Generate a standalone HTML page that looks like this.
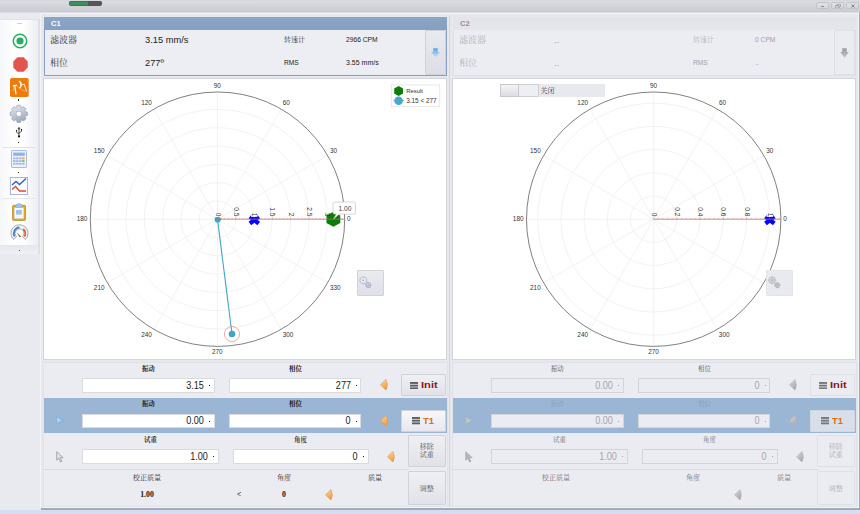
<!DOCTYPE html>
<html lang="zh"><head><meta charset="utf-8"><title>C1 C2</title>
<style>
html,body{margin:0;padding:0}
body{width:860px;height:514px;position:relative;overflow:hidden;background:#e9eaef;font-family:"Liberation Sans","Noto Serif CJK SC",sans-serif}
.abs{position:absolute}
.wb{top:2.3px;width:13.7px;height:6.6px;background:linear-gradient(#e0e1e7,#d5d6dc);border:0.8px solid #c2c3ca;box-sizing:border-box;border-radius:1.6px}
.t{font-family:"Liberation Sans","Noto Serif CJK SC",sans-serif;white-space:nowrap}
.cj{font-family:"Liberation Sans","Noto Serif CJK SC",serif;white-space:nowrap}
.ser{font-family:"Liberation Serif","Noto Serif CJK SC",serif;font-size:7.8px;font-weight:bold;line-height:9px;text-align:center;color:#111}
.bt{font-family:"Liberation Sans",sans-serif;font-weight:bold;font-size:9.7px;line-height:12px;white-space:nowrap;transform-origin:0 50%}
.lab{font-size:7.1px;line-height:10px;text-align:center}
.lab.sm{font-size:6.4px}
.al{font-family:"Liberation Sans",sans-serif;font-size:6.4px;fill:#333}
.rl{font-family:"Liberation Sans",sans-serif;font-size:7.3px;fill:#333}
.btnd{background:#ebecf1;border:1px solid #dfe0e6;box-sizing:border-box;border-radius:1px}
.btn{background:linear-gradient(#eff0f4,#e0e2e8);border:1px solid #d0d2d9;box-sizing:border-box;border-radius:1px}
.inp{box-sizing:border-box;font-family:"Liberation Sans",sans-serif;font-size:10.2px;line-height:12px;text-align:right}
.inp span{position:absolute;right:9.8px;top:0.4px;transform:scaleX(0.89);transform-origin:100% 50%}
.inp i{position:absolute;right:3.6px;top:6px;width:1.4px;height:1.2px}
</style></head>
<body>
<svg width="0" height="0" style="position:absolute"><defs>
<linearGradient id="ga" x1="0" y1="0" x2="0.3" y2="1"><stop offset="0" stop-color="#fcd9a4"/><stop offset="1" stop-color="#f39c43"/></linearGradient>
<linearGradient id="gd" x1="0" y1="0" x2="0.6" y2="1"><stop offset="0" stop-color="#dadadc"/><stop offset="1" stop-color="#a9a9ad"/></linearGradient>
<linearGradient id="gb" x1="0" y1="0" x2="0" y2="1"><stop offset="0" stop-color="#5aa2e6"/><stop offset="1" stop-color="#cfe6fb"/></linearGradient>
<linearGradient id="gg" x1="0.2" y1="0" x2="0.6" y2="1"><stop offset="0" stop-color="#e3e7ef"/><stop offset="0.5" stop-color="#c2c9d6"/><stop offset="1" stop-color="#9ca6b9"/></linearGradient>
<linearGradient id="gx" x1="0" y1="0" x2="0" y2="1"><stop offset="0" stop-color="#9c9ca0"/><stop offset="1" stop-color="#c2c2c6"/></linearGradient>
<linearGradient id="gp" x1="0" y1="0" x2="1" y2="1"><stop offset="0" stop-color="#c6e3fb"/><stop offset="1" stop-color="#86bcec"/></linearGradient>
</defs></svg>
<div class="abs" style="left:0;top:0;width:860px;height:11.5px;background:linear-gradient(#d6d7dd 0,#dbdce2 12%,#c9cad2 100%)"></div>
<div class="abs" style="left:0;top:11.5px;width:860px;height:1px;background:#dcdde3"></div>
<div class="abs" style="left:69px;top:0.9px;width:32.5px;height:4.9px;border-radius:2.4px;box-shadow:inset 0 0 0 0.6px #515554;background:linear-gradient(90deg,#3f8f5a 0,#3f8f5a 59%,#55565a 59%,#55565a 100%)"></div>
<div class="abs wb" style="left:815.5px"><div class="abs" style="left:4.6px;top:2.8px;width:3.4px;height:0.9px;background:#8e8f95"></div></div>
<div class="abs wb" style="left:830.6px"><svg class="abs" style="left:3.6px;top:0.4px" width="6" height="4.6" viewBox="0 0 6 4.6"><rect x="1.9" y="0.4" width="3.6" height="2.5" rx="0.6" fill="none" stroke="#8a8b91" stroke-width="0.7"/><rect x="0.4" y="1.6" width="3.6" height="2.5" rx="0.6" fill="#dadbe1" stroke="#8a8b91" stroke-width="0.7"/></svg></div>
<div class="abs wb" style="left:845.5px"><svg class="abs" style="left:4.4px;top:0.7px" width="4" height="4" viewBox="0 0 4 4"><path d="M0.4,0.4 L3.6,3.6 M3.6,0.4 L0.4,3.6" stroke="#85868c" stroke-width="1"/></svg></div>
<div class="abs" style="left:40px;top:13.3px;width:818.6px;height:495px;background:#e7e8ed;border-left:1px solid #f3f4f7;border-top:1px solid #f3f4f7;box-sizing:border-box"></div>
<div class="abs" style="left:0;top:19px;width:40.3px;height:235px;background:linear-gradient(90deg,#f6f7fa 0%,#ffffff 35%,#ffffff 60%,#eceef3 100%);border-right:2px solid #dedfe5;border-top:1px solid #e1e2e8;box-sizing:border-box"></div>
<div class="abs" style="left:0;top:245px;width:38px;height:9px;background:linear-gradient(#e6e7ed,#eff0f5)"></div>
<div class="abs" style="left:17px;top:22.5px;width:5px;height:1px;background:#cfcfd4"></div>
<svg class="abs" style="left:11.5px;top:33px" width="16" height="16" viewBox="0 0 16 16"><circle cx="8" cy="8" r="6.7" fill="#fff" stroke="#27ae60" stroke-width="1.5"/><circle cx="8" cy="8" r="3.6" fill="#27ae60"/></svg>
<svg class="abs" style="left:12.5px;top:57px" width="15" height="15" viewBox="0 0 15 15"><polygon points="4.4,0.3 10.6,0.3 14.7,4.4 14.7,10.6 10.6,14.7 4.4,14.7 0.3,10.6 0.3,4.4" fill="#e2554f"/></svg>
<svg class="abs" style="left:9.9px;top:77.8px" width="18.7" height="19" viewBox="0 0 18.7 19"><rect x="0" y="0" width="18.7" height="19" rx="1.7" fill="#ee7b0a"/><path d="M2.9,7.8 L6.9,7.2 M4.7,7.6 L6.1,16.3" fill="none" stroke="#fff" stroke-width="1.2"/><path d="M9.4,3 Q12.6,6.6 9.6,10.4" fill="none" stroke="#fff" stroke-width="1.3"/><path d="M11.2,6.9 L14.3,6.3 L16.6,13.4" fill="none" stroke="#fff" stroke-width="0.9"/><path d="M3.2,8.2 L3.6,13.6 M6.9,7.4 L8.6,10.4 M10.6,11 L15.6,13.6 M8,4.4 L9.4,3" fill="none" stroke="#f9c79b" stroke-width="0.5"/></svg>
<div class="abs" style="left:18px;top:99.3px;width:1.2px;height:1.3px;background:#333"></div>
<svg class="abs" style="left:9.2px;top:104.1px" width="19.6" height="19.6" viewBox="-9.8 -9.8 19.6 19.6"><polygon points="-2.07,-6.69 -1.75,-8.62 1.75,-8.62 2.07,-6.69 3.27,-6.19 4.86,-7.33 7.33,-4.86 6.19,-3.27 6.69,-2.07 8.62,-1.75 8.62,1.75 6.69,2.07 6.19,3.27 7.33,4.86 4.86,7.33 3.27,6.19 2.07,6.69 1.75,8.62 -1.75,8.62 -2.07,6.69 -3.27,6.19 -4.86,7.33 -7.33,4.86 -6.19,3.27 -6.69,2.07 -8.62,1.75 -8.62,-1.75 -6.69,-2.07 -6.19,-3.27 -7.33,-4.86 -4.86,-7.33 -3.27,-6.19" fill="url(#gg)" stroke="#98a2b6" stroke-width="0.7" stroke-linejoin="round"/><circle r="3.1" fill="#a9b3c5"/><circle r="2.4" fill="#fff"/></svg>
<svg class="abs" style="left:15px;top:127px" width="8" height="11" viewBox="0 0 8 11"><path d="M4,0.3 L5,1.8 H3 Z M4,1.5 V9 M4,7 L1.5,5.2 V3.6 M4,6 L6.5,4.4 V3" fill="none" stroke="#111" stroke-width="0.7"/><circle cx="4" cy="9.4" r="1.1" fill="#111"/><rect x="5.9" y="2" width="1.2" height="1.2" fill="#111"/><circle cx="1.5" cy="3.3" r="0.6" fill="#111"/></svg>
<div class="abs" style="left:18px;top:141.5px;width:1.4px;height:1.4px;background:#222"></div>
<div class="abs" style="left:3px;top:146.5px;width:32px;height:1px;background:#e1e2e8"></div>
<svg class="abs" style="left:11px;top:150px" width="16" height="18" viewBox="0 0 16 18"><rect x="0.4" y="0.4" width="15.2" height="17.2" rx="1.2" fill="#eef2fb" stroke="#8aa0d6" stroke-width="0.8"/><rect x="2.2" y="2.6" width="11.6" height="3.2" fill="#8ab4ea"/><rect x="2.2" y="7.4" width="2.3" height="1.9" fill="#9fb4e6"/><rect x="5.2" y="7.4" width="2.3" height="1.9" fill="#9fb4e6"/><rect x="8.2" y="7.4" width="2.3" height="1.9" fill="#9fb4e6"/><rect x="11.2" y="7.4" width="2.3" height="1.9" fill="#f0a030"/><rect x="2.2" y="10.100000000000001" width="2.3" height="1.9" fill="#9fb4e6"/><rect x="5.2" y="10.100000000000001" width="2.3" height="1.9" fill="#9fb4e6"/><rect x="8.2" y="10.100000000000001" width="2.3" height="1.9" fill="#9fb4e6"/><rect x="11.2" y="10.100000000000001" width="2.3" height="1.9" fill="#7cc040"/><rect x="2.2" y="12.8" width="2.3" height="1.9" fill="#9fb4e6"/><rect x="5.2" y="12.8" width="2.3" height="1.9" fill="#9fb4e6"/><rect x="8.2" y="12.8" width="2.3" height="1.9" fill="#9fb4e6"/><rect x="11.2" y="12.8" width="2.3" height="1.9" fill="#9fb4e6"/></svg>
<div class="abs" style="left:18px;top:171.5px;width:1.4px;height:1.4px;background:#222"></div>
<svg class="abs" style="left:10px;top:177px" width="18" height="18" viewBox="0 0 18 18"><rect x="0.4" y="0.4" width="17.2" height="17.2" fill="#fbfcff" stroke="#9aa6cf" stroke-width="0.8"/><path d="M2,8 L6,4.5 L9.5,7.5 L16,1.5" fill="none" stroke="#2d5fc4" stroke-width="1.4"/><path d="M2,12.5 L5.5,9.5 L9.5,14 L16,14" fill="none" stroke="#d84a3a" stroke-width="1.4"/></svg>
<div class="abs" style="left:3px;top:198px;width:32px;height:1px;background:#e6e7ec"></div>
<svg class="abs" style="left:12px;top:202.5px" width="14" height="18" viewBox="0 0 14 18"><rect x="0.5" y="2.2" width="13" height="15.3" rx="1.3" fill="#e2a51c" stroke="#b07a10" stroke-width="0.6"/><rect x="2.3" y="4.6" width="9.4" height="11" fill="#f4f7fc" stroke="#d0d6e4" stroke-width="0.3"/><rect x="4" y="7" width="5.8" height="4.6" fill="#9fc0ee"/><path d="M4.2,2.8 Q4.2,0.5 7,0.5 Q9.8,0.5 9.8,2.8 L10.6,4.2 H3.4 Z" fill="#a9c4ea" stroke="#7f9fd0" stroke-width="0.5"/></svg>
<svg class="abs" style="left:9.5px;top:224px" width="19" height="17" viewBox="0 0 19 17"><path d="M3.6,15.6 A8.6,8.6 0 1 1 15.4,15.6 L12.4,12.6 A4.4,4.4 0 1 0 6.6,12.6 Z" fill="#f4f4f6" stroke="#8a8a8e" stroke-width="0.7"/><path d="M4.6,12.6 A6.2,6.2 0 0 1 9.5,3.4" fill="none" stroke="#3c7fc8" stroke-width="1.8"/><path d="M13.2,5 A6.2,6.2 0 0 1 14.4,12.6" fill="none" stroke="#e5603a" stroke-width="1.8"/><path d="M6.5,8 L11.2,12.6 L9.4,13.2 Z" fill="#777"/></svg>
<div class="abs" style="left:18.5px;top:249.5px;width:1px;height:1px;background:#555"></div>
<div class="abs" style="left:44px;top:16.5px;width:402.5px;height:59px;background:#eceef4;border:1px solid #86a0c4;box-sizing:border-box"></div>
<div class="abs" style="left:44px;top:16.5px;width:402.5px;height:13px;background:linear-gradient(#8ba5c4,#879fc0)"></div>
<div class="abs bt" style="left:50.5px;top:19.6px;font-size:7.1px;color:#fff;line-height:8px;transform:scaleX(1.06)">C1</div>
<div class="abs cj" style="left:50px;top:34px;font-size:9px;line-height:12px;color:#3a3a3a">滤波器</div>
<div class="abs cj" style="left:50px;top:57px;font-size:9px;line-height:12px;color:#3a3a3a">相位</div>
<div class="abs t" style="left:145px;top:34px;font-size:9.8px;line-height:12px;color:#222;transform:scaleX(0.95);transform-origin:0 0">3.15 mm/s</div>
<div class="abs t" style="left:145px;top:57px;font-size:9.8px;line-height:12px;color:#222;transform:scaleX(0.95);transform-origin:0 0">277º</div>
<div class="abs cj" style="left:284px;top:35px;font-size:7px;line-height:10px;color:#3a3a3a">转速计</div>
<div class="abs t" style="left:284px;top:57.5px;font-size:6.6px;line-height:10px;color:#222">RMS</div>
<div class="abs t" style="left:346px;top:35px;font-size:6.7px;line-height:10px;color:#222">2966 CPM</div>
<div class="abs t" style="left:346px;top:57.5px;font-size:7px;line-height:10px;color:#222">3.55 mm/s</div>
<div class="abs btn" style="left:425.3px;top:29.5px;width:20.3px;height:45.2px;background:linear-gradient(#e9eaef,#dddee5)"></div>
<svg class="abs" style="left:431px;top:47.5px" width="9" height="10" viewBox="0 0 9 10"><path d="M2.2,0.3 H6.8 V4 H8.8 L4.5,9.8 L0.2,4 H2.2 Z" fill="url(#gb)"/></svg>
<div class="abs" style="left:43.2px;top:78px;width:404.1px;height:282.3px;background:#fff;border:1px solid #d3d5dc;box-sizing:border-box"></div>
<svg class="abs" style="left:0;top:0" width="860" height="514" viewBox="0 0 860 514">
<line x1="217.5" y1="219.2" x2="344.70" y2="219.20" stroke="#ececec" stroke-width="0.7"/>
<line x1="217.5" y1="219.2" x2="327.66" y2="155.60" stroke="#ececec" stroke-width="0.7"/>
<line x1="217.5" y1="219.2" x2="281.10" y2="109.04" stroke="#ececec" stroke-width="0.7"/>
<line x1="217.5" y1="219.2" x2="217.50" y2="92.00" stroke="#ececec" stroke-width="0.7"/>
<line x1="217.5" y1="219.2" x2="153.90" y2="109.04" stroke="#ececec" stroke-width="0.7"/>
<line x1="217.5" y1="219.2" x2="107.34" y2="155.60" stroke="#ececec" stroke-width="0.7"/>
<line x1="217.5" y1="219.2" x2="90.30" y2="219.20" stroke="#ececec" stroke-width="0.7"/>
<line x1="217.5" y1="219.2" x2="107.34" y2="282.80" stroke="#ececec" stroke-width="0.7"/>
<line x1="217.5" y1="219.2" x2="153.90" y2="329.36" stroke="#ececec" stroke-width="0.7"/>
<line x1="217.5" y1="219.2" x2="217.50" y2="346.40" stroke="#ececec" stroke-width="0.7"/>
<line x1="217.5" y1="219.2" x2="281.10" y2="329.36" stroke="#ececec" stroke-width="0.7"/>
<line x1="217.5" y1="219.2" x2="327.66" y2="282.80" stroke="#ececec" stroke-width="0.7"/>
<circle cx="217.5" cy="219.2" r="18.30" fill="none" stroke="#ececec" stroke-width="0.7"/>
<circle cx="217.5" cy="219.2" r="36.60" fill="none" stroke="#ececec" stroke-width="0.7"/>
<circle cx="217.5" cy="219.2" r="54.90" fill="none" stroke="#ececec" stroke-width="0.7"/>
<circle cx="217.5" cy="219.2" r="73.20" fill="none" stroke="#ececec" stroke-width="0.7"/>
<circle cx="217.5" cy="219.2" r="91.50" fill="none" stroke="#ececec" stroke-width="0.7"/>
<circle cx="217.5" cy="219.2" r="109.80" fill="none" stroke="#ececec" stroke-width="0.7"/>
<circle cx="217.5" cy="219.2" r="127.2" fill="none" stroke="#606060" stroke-width="0.8"/>
<text x="348.8" y="221.2" text-anchor="middle" class="al">0</text>
<text x="333.5" y="152.7" text-anchor="middle" class="al">30</text>
<text x="286.3" y="105.2" text-anchor="middle" class="al">60</text>
<text x="217.3" y="87.9" text-anchor="middle" class="al">90</text>
<text x="146.5" y="105.2" text-anchor="middle" class="al">120</text>
<text x="99.2" y="152.7" text-anchor="middle" class="al">150</text>
<text x="82.0" y="221.2" text-anchor="middle" class="al">180</text>
<text x="99.2" y="289.9" text-anchor="middle" class="al">210</text>
<text x="146.5" y="337.0" text-anchor="middle" class="al">240</text>
<text x="217.3" y="354.1" text-anchor="middle" class="al">270</text>
<text x="288.0" y="337.0" text-anchor="middle" class="al">300</text>
<text x="335.3" y="289.9" text-anchor="middle" class="al">330</text>
<line x1="217.5" y1="219.2" x2="232.0" y2="334.0" stroke="#3fa6c6" stroke-width="1.1"/>
<circle cx="217.7" cy="219.5" r="3.1" fill="#3fa6c6"/>
<circle cx="232.0" cy="334.0" r="7.6" fill="none" stroke="#e58a8a" stroke-width="0.7"/>
<circle cx="232.0" cy="334.0" r="3.3" fill="#3fa6c6"/>
<path transform="translate(254.3,220)" d="M-4.4,-3.4 L4.4,3.4 M4.4,-3.4 L-4.4,3.4" stroke="#0505ff" stroke-width="4.4" fill="none"/>
<polygon points="333.40,211.80 340.30,215.55 340.30,223.05 333.40,226.80 326.50,223.05 326.50,215.55" fill="#0a7d0a"/>
<line x1="217.5" y1="219.2" x2="344.7" y2="219.2" stroke="#c9615f" stroke-width="0.7"/>
<line x1="217.50" y1="217.60" x2="217.50" y2="219.2" stroke="#c9615f" stroke-width="0.5"/>
<line x1="221.16" y1="218.30" x2="221.16" y2="219.2" stroke="#c9615f" stroke-width="0.5"/>
<line x1="224.82" y1="218.30" x2="224.82" y2="219.2" stroke="#c9615f" stroke-width="0.5"/>
<line x1="228.48" y1="218.30" x2="228.48" y2="219.2" stroke="#c9615f" stroke-width="0.5"/>
<line x1="232.14" y1="218.30" x2="232.14" y2="219.2" stroke="#c9615f" stroke-width="0.5"/>
<line x1="235.80" y1="217.60" x2="235.80" y2="219.2" stroke="#c9615f" stroke-width="0.5"/>
<line x1="239.46" y1="218.30" x2="239.46" y2="219.2" stroke="#c9615f" stroke-width="0.5"/>
<line x1="243.12" y1="218.30" x2="243.12" y2="219.2" stroke="#c9615f" stroke-width="0.5"/>
<line x1="246.78" y1="218.30" x2="246.78" y2="219.2" stroke="#c9615f" stroke-width="0.5"/>
<line x1="250.44" y1="218.30" x2="250.44" y2="219.2" stroke="#c9615f" stroke-width="0.5"/>
<line x1="254.10" y1="217.60" x2="254.10" y2="219.2" stroke="#c9615f" stroke-width="0.5"/>
<line x1="257.76" y1="218.30" x2="257.76" y2="219.2" stroke="#c9615f" stroke-width="0.5"/>
<line x1="261.42" y1="218.30" x2="261.42" y2="219.2" stroke="#c9615f" stroke-width="0.5"/>
<line x1="265.08" y1="218.30" x2="265.08" y2="219.2" stroke="#c9615f" stroke-width="0.5"/>
<line x1="268.74" y1="218.30" x2="268.74" y2="219.2" stroke="#c9615f" stroke-width="0.5"/>
<line x1="272.40" y1="217.60" x2="272.40" y2="219.2" stroke="#c9615f" stroke-width="0.5"/>
<line x1="276.06" y1="218.30" x2="276.06" y2="219.2" stroke="#c9615f" stroke-width="0.5"/>
<line x1="279.72" y1="218.30" x2="279.72" y2="219.2" stroke="#c9615f" stroke-width="0.5"/>
<line x1="283.38" y1="218.30" x2="283.38" y2="219.2" stroke="#c9615f" stroke-width="0.5"/>
<line x1="287.04" y1="218.30" x2="287.04" y2="219.2" stroke="#c9615f" stroke-width="0.5"/>
<line x1="290.70" y1="217.60" x2="290.70" y2="219.2" stroke="#c9615f" stroke-width="0.5"/>
<line x1="294.36" y1="218.30" x2="294.36" y2="219.2" stroke="#c9615f" stroke-width="0.5"/>
<line x1="298.02" y1="218.30" x2="298.02" y2="219.2" stroke="#c9615f" stroke-width="0.5"/>
<line x1="301.68" y1="218.30" x2="301.68" y2="219.2" stroke="#c9615f" stroke-width="0.5"/>
<line x1="305.34" y1="218.30" x2="305.34" y2="219.2" stroke="#c9615f" stroke-width="0.5"/>
<line x1="309.00" y1="217.60" x2="309.00" y2="219.2" stroke="#c9615f" stroke-width="0.5"/>
<line x1="312.66" y1="218.30" x2="312.66" y2="219.2" stroke="#c9615f" stroke-width="0.5"/>
<line x1="316.32" y1="218.30" x2="316.32" y2="219.2" stroke="#c9615f" stroke-width="0.5"/>
<line x1="319.98" y1="218.30" x2="319.98" y2="219.2" stroke="#c9615f" stroke-width="0.5"/>
<line x1="323.64" y1="218.30" x2="323.64" y2="219.2" stroke="#c9615f" stroke-width="0.5"/>
<line x1="327.30" y1="217.60" x2="327.30" y2="219.2" stroke="#c9615f" stroke-width="0.5"/>
<line x1="330.96" y1="218.30" x2="330.96" y2="219.2" stroke="#c9615f" stroke-width="0.5"/>
<line x1="334.62" y1="218.30" x2="334.62" y2="219.2" stroke="#c9615f" stroke-width="0.5"/>
<line x1="338.28" y1="218.30" x2="338.28" y2="219.2" stroke="#c9615f" stroke-width="0.5"/>
<line x1="341.94" y1="218.30" x2="341.94" y2="219.2" stroke="#c9615f" stroke-width="0.5"/>
<rect x="214.10" y="212.90" width="6.8" height="4.2" fill="#fff"/>
<line x1="217.5" y1="219.2" x2="221.5" y2="219.2" stroke="#c9615f" stroke-width="0.7"/>
<text transform="translate(215.50,216.40) rotate(90) scale(0.9,1)" text-anchor="end" class="rl">0</text>
<text transform="translate(233.80,216.40) rotate(90) scale(0.9,1)" text-anchor="end" class="rl">0.5</text>
<rect x="250.90" y="212.90" width="6.6" height="3.9" fill="#fff"/>
<text transform="translate(252.10,216.40) rotate(90) scale(0.9,1)" text-anchor="end" class="rl">1</text>
<text transform="translate(270.40,216.40) rotate(90) scale(0.9,1)" text-anchor="end" class="rl">1.5</text>
<text transform="translate(288.70,216.40) rotate(90) scale(0.9,1)" text-anchor="end" class="rl">2</text>
<text transform="translate(307.00,216.40) rotate(90) scale(0.9,1)" text-anchor="end" class="rl">2.5</text>
<text transform="translate(325.30,216.40) rotate(90) scale(0.9,1)" text-anchor="end" class="rl">3</text>
<path d="M334.5,202 H354 Q355.5,202 355.5,203.5 V212.6 Q355.5,214.1 354,214.1 H339.3 L333.6,219 L336.2,214.1 H334.5 Q333,214.1 333,212.6 V203.5 Q333,202 334.5,202 Z" fill="#fff" stroke="#bdbdbd" stroke-width="0.6"/>
<text x="345" y="210.7" text-anchor="middle" class="al" style="font-size:6.6px;fill:#444">1.00</text>
<rect x="391.3" y="85" width="48.5" height="21.7" fill="#fff" stroke="#dedede" stroke-width="0.7"/>
<polygon points="398.60,86.10 403.00,88.55 403.00,93.45 398.60,95.90 394.20,93.45 394.20,88.55" fill="#0a7d0a"/>
<line x1="393.3" y1="100.7" x2="403.9" y2="100.7" stroke="#3fa6c6" stroke-width="0.7"/>
<circle cx="398.6" cy="100.7" r="4.3" fill="#46a9c8"/>
<text x="406.2" y="92.9" class="al" style="font-size:5.9px">Result</text>
<text x="406.2" y="102.9" class="al" style="font-size:6.4px">3.15 &lt; 277</text>
</svg>
<div class="abs" style="left:357.3px;top:270.3px;width:26.5px;height:25.6px;background:linear-gradient(#eaebf1,#dfe0e7);border:1px solid #d2d3da;box-sizing:border-box;border-radius:1px"></div>
<svg class="abs" style="left:357.3px;top:270.3px" width="27" height="25" viewBox="0 0 27 25"><polygon points="9.93,9.58 9.93,11.02 9.20,10.88 8.76,11.94 9.38,12.36 8.36,13.38 7.94,12.76 6.88,13.20 7.02,13.93 5.58,13.93 5.72,13.20 4.66,12.76 4.24,13.38 3.22,12.36 3.84,11.94 3.40,10.88 2.67,11.02 2.67,9.58 3.40,9.72 3.84,8.66 3.22,8.24 4.24,7.22 4.66,7.84 5.72,7.40 5.58,6.67 7.02,6.67 6.88,7.40 7.94,7.84 8.36,7.22 9.38,8.24 8.76,8.66 9.20,9.72" fill="#e9ecf2" stroke="#98a3b8" stroke-width="0.5" stroke-linejoin="round"/><circle cx="6.3" cy="10.3" r="0.7" fill="#8791aa"/><polygon points="14.03,14.58 14.03,15.82 13.48,15.70 13.05,16.60 13.49,16.95 12.51,17.72 12.27,17.22 11.30,17.44 11.30,18.00 10.09,17.72 10.33,17.22 9.55,16.60 9.11,16.95 8.57,15.82 9.12,15.70 9.12,14.70 8.57,14.58 9.11,13.45 9.55,13.80 10.33,13.18 10.09,12.68 11.30,12.40 11.30,12.96 12.27,13.18 12.51,12.68 13.49,13.45 13.05,13.80 13.48,14.70" fill="#cdd3df" stroke="#8791aa" stroke-width="0.5" stroke-linejoin="round"/><circle cx="11.3" cy="15.2" r="0.6" fill="#8791aa"/></svg>
<div class="abs" style="left:42.6px;top:361.5px;width:405.4px;height:145.3px;background:#ebecf1;border:1px solid #e1e2e7;box-sizing:border-box"></div>
<div class="abs" style="left:44px;top:398.2px;width:402.5px;height:34.6px;background:#9bb5d5"></div>
<div class="abs" style="left:44px;top:468.5px;width:364.5px;height:1px;background:#d9dbe1"></div>
<div class="abs cj lab sm" style="left:128.3px;top:363.5px;width:40px;color:#111;font-weight:bold">振动</div>
<div class="abs cj lab sm" style="left:275.5px;top:363.5px;width:40px;color:#111;font-weight:bold">相位</div>
<div class="abs inp" style="left:81.8px;top:378.2px;width:133px;height:14.4px;background:#fff;border:1px solid #d9dbe1;color:#222"><span>3.15</span><i style="background:#222"></i></div>
<div class="abs inp" style="left:228.8px;top:378.2px;width:132.7px;height:14.4px;background:#fff;border:1px solid #d9dbe1;color:#222"><span>277</span><i style="background:#222"></i></div>
<svg class="abs" style="left:380.2px;top:379.4px" width="9" height="11.6" viewBox="0 0 9 11.6"><path d="M0.4,5.8 L6,0.4 Q8.9,5.8 6,11.2 Z" fill="url(#ga)" stroke="#dd9242" stroke-width="0.5" stroke-linejoin="round"/></svg>
<div class="abs btn" style="left:401.3px;top:374.4px;width:44.4px;height:21.8px"></div>
<svg class="abs" style="left:409.7px;top:381.7px" width="8.4" height="7.4" viewBox="0 0 8.4 7.4"><rect x="0" y="0" width="8.4" height="1.9" fill="#5e5e62"/><rect x="0" y="2.7" width="8.4" height="1.9" fill="#5e5e62"/><rect x="0" y="5.4" width="8.4" height="1.9" fill="#5e5e62"/></svg>
<div class="abs bt" style="left:421.2px;top:379.4px;color:#8b1616;transform:scaleX(1.15)">Init</div>
<div class="abs cj lab sm" style="left:128.3px;top:399px;width:40px;color:#111;font-weight:bold">振动</div>
<div class="abs cj lab sm" style="left:275.5px;top:399px;width:40px;color:#111;font-weight:bold">相位</div>
<div class="abs inp" style="left:81.8px;top:413.8px;width:133px;height:14.4px;background:#fff;border:1px solid #d9dbe1;color:#222"><span>0.00</span><i style="background:#222"></i></div>
<div class="abs inp" style="left:228.8px;top:413.8px;width:132.7px;height:14.4px;background:#fff;border:1px solid #d9dbe1;color:#222"><span>0</span><i style="background:#222"></i></div>
<svg class="abs" style="left:380.2px;top:415.0px" width="9" height="11.6" viewBox="0 0 9 11.6"><path d="M0.4,5.8 L6,0.4 Q8.9,5.8 6,11.2 Z" fill="url(#ga)" stroke="#dd9242" stroke-width="0.5" stroke-linejoin="round"/></svg>
<svg class="abs" style="left:55.5px;top:415.8px" width="8" height="9" viewBox="0 0 8 9"><path d="M0.7,0.8 L7,4.5 L0.7,8.2 Z" fill="url(#gp)" stroke="#6aa7e2" stroke-width="0.6"/></svg>
<div class="abs btn" style="left:401.3px;top:410px;width:44.4px;height:21.5px;background:linear-gradient(#f6f7fa,#e6e8ee);"></div>
<svg class="abs" style="left:411.5px;top:417.2px" width="8.4" height="7.4" viewBox="0 0 8.4 7.4"><rect x="0" y="0" width="8.4" height="1.9" fill="#5e5e62"/><rect x="0" y="2.7" width="8.4" height="1.9" fill="#5e5e62"/><rect x="0" y="5.4" width="8.4" height="1.9" fill="#5e5e62"/></svg>
<div class="abs bt" style="left:423.3px;top:414.9px;color:#dd6f12;transform:scaleX(0.97)">T1</div>
<div class="abs cj lab sm" style="left:130.5px;top:434.5px;width:40px;color:#333;font-weight:bold">试重</div>
<div class="abs cj lab sm" style="left:280.5px;top:434.5px;width:40px;color:#333;font-weight:bold">角度</div>
<div class="abs inp" style="left:82.4px;top:449.3px;width:136.5px;height:14.4px;background:#fff;border:1px solid #d9dbe1;color:#222"><span>1.00</span><i style="background:#222"></i></div>
<div class="abs inp" style="left:232.9px;top:449.3px;width:135.9px;height:14.4px;background:#fff;border:1px solid #d9dbe1;color:#222"><span>0</span><i style="background:#222"></i></div>
<svg class="abs" style="left:387.0px;top:450.5px" width="9" height="11.6" viewBox="0 0 9 11.6"><path d="M0.4,5.8 L6,0.4 Q8.9,5.8 6,11.2 Z" fill="url(#ga)" stroke="#dd9242" stroke-width="0.5" stroke-linejoin="round"/></svg>
<svg class="abs" style="left:56px;top:450.5px" width="9" height="12" viewBox="0 0 9 12"><path d="M0.7,0.7 L0.7,9.2 L2.8,7.2 L4.4,11 L5.9,10.4 L4.3,6.7 L7.2,6.7 Z" fill="#dfe1e1" stroke="#8f8f92" stroke-width="0.7"/></svg>
<div class="abs btn" style="left:408px;top:435px;width:37.7px;height:32px"></div>
<div class="abs cj" style="left:408px;top:442.5px;width:37.7px;text-align:center;font-size:7px;line-height:8.5px;color:#5c5c60">移除<br>试重</div>
<div class="abs cj lab" style="left:127px;top:473px;width:40px;color:#333">校正质量</div>
<div class="abs cj lab" style="left:264px;top:473px;width:40px;color:#333">角度</div>
<div class="abs cj lab" style="left:355px;top:473px;width:40px;color:#333">质量</div>
<div class="abs ser" style="left:127px;top:490px;width:40px">1.00</div>
<div class="abs ser" style="left:219px;top:490px;width:40px">&lt;</div>
<div class="abs ser" style="left:264px;top:490px;width:40px">0</div>
<svg class="abs" style="left:325.09999999999997px;top:488.9px" width="9" height="11.6" viewBox="0 0 9 11.6"><path d="M0.4,5.8 L6,0.4 Q8.9,5.8 6,11.2 Z" fill="url(#ga)" stroke="#dd9242" stroke-width="0.5" stroke-linejoin="round"/></svg>
<div class="abs btn" style="left:408px;top:471px;width:37.7px;height:33.5px"></div>
<div class="abs cj" style="left:408px;top:483.5px;width:37.7px;text-align:center;font-size:7px;line-height:9px;color:#5c5c60">调整</div>
<div class="abs" style="left:453px;top:16.5px;width:402.5px;height:59px;background:#ecedf3;border:1px solid #dfe0e7;box-sizing:border-box"></div>
<div class="abs" style="left:453px;top:16.5px;width:402.5px;height:13px;background:#e4e5eb"></div>
<div class="abs bt" style="left:459.5px;top:19.6px;font-size:7.1px;color:#8f9098;line-height:8px;transform:scaleX(1.06)">C2</div>
<div class="abs cj" style="left:459px;top:34px;font-size:9px;line-height:12px;color:#b4b5bd">滤波器</div>
<div class="abs cj" style="left:459px;top:57px;font-size:9px;line-height:12px;color:#b4b5bd">相位</div>
<div class="abs t" style="left:554px;top:34px;font-size:9.8px;line-height:12px;color:#9fa0a8;transform:scaleX(0.95);transform-origin:0 0">..</div>
<div class="abs t" style="left:554px;top:57px;font-size:9.8px;line-height:12px;color:#9fa0a8;transform:scaleX(0.95);transform-origin:0 0">..</div>
<div class="abs cj" style="left:693px;top:35px;font-size:7px;line-height:10px;color:#b4b5bd">转速计</div>
<div class="abs t" style="left:693px;top:57.5px;font-size:6.6px;line-height:10px;color:#9fa0a8">RMS</div>
<div class="abs t" style="left:755px;top:35px;font-size:6.7px;line-height:10px;color:#9fa0a8">0 CPM</div>
<div class="abs t" style="left:755px;top:57.5px;font-size:7px;line-height:10px;color:#9fa0a8">..</div>
<div class="abs btnd" style="left:834.3px;top:29.5px;width:20.3px;height:45.2px;"></div>
<svg class="abs" style="left:840px;top:47.5px" width="9" height="10" viewBox="0 0 9 10"><path d="M2.2,0.3 H6.8 V4 H8.8 L4.5,9.8 L0.2,4 H2.2 Z" fill="url(#gx)"/></svg>
<div class="abs" style="left:452.2px;top:78px;width:404.1px;height:282.3px;background:#fff;border:1px solid #d3d5dc;box-sizing:border-box"></div>
<svg class="abs" style="left:0;top:0" width="860" height="514" viewBox="0 0 860 514">
<line x1="653.7" y1="219.2" x2="780.90" y2="219.20" stroke="#ececec" stroke-width="0.7"/>
<line x1="653.7" y1="219.2" x2="763.86" y2="155.60" stroke="#ececec" stroke-width="0.7"/>
<line x1="653.7" y1="219.2" x2="717.30" y2="109.04" stroke="#ececec" stroke-width="0.7"/>
<line x1="653.7" y1="219.2" x2="653.70" y2="92.00" stroke="#ececec" stroke-width="0.7"/>
<line x1="653.7" y1="219.2" x2="590.10" y2="109.04" stroke="#ececec" stroke-width="0.7"/>
<line x1="653.7" y1="219.2" x2="543.54" y2="155.60" stroke="#ececec" stroke-width="0.7"/>
<line x1="653.7" y1="219.2" x2="526.50" y2="219.20" stroke="#ececec" stroke-width="0.7"/>
<line x1="653.7" y1="219.2" x2="543.54" y2="282.80" stroke="#ececec" stroke-width="0.7"/>
<line x1="653.7" y1="219.2" x2="590.10" y2="329.36" stroke="#ececec" stroke-width="0.7"/>
<line x1="653.7" y1="219.2" x2="653.70" y2="346.40" stroke="#ececec" stroke-width="0.7"/>
<line x1="653.7" y1="219.2" x2="717.30" y2="329.36" stroke="#ececec" stroke-width="0.7"/>
<line x1="653.7" y1="219.2" x2="763.86" y2="282.80" stroke="#ececec" stroke-width="0.7"/>
<circle cx="653.7" cy="219.2" r="23.20" fill="none" stroke="#ececec" stroke-width="0.7"/>
<circle cx="653.7" cy="219.2" r="46.40" fill="none" stroke="#ececec" stroke-width="0.7"/>
<circle cx="653.7" cy="219.2" r="69.60" fill="none" stroke="#ececec" stroke-width="0.7"/>
<circle cx="653.7" cy="219.2" r="92.80" fill="none" stroke="#ececec" stroke-width="0.7"/>
<circle cx="653.7" cy="219.2" r="116.00" fill="none" stroke="#ececec" stroke-width="0.7"/>
<circle cx="653.7" cy="219.2" r="127.2" fill="none" stroke="#606060" stroke-width="0.8"/>
<text x="785.0" y="221.2" text-anchor="middle" class="al">0</text>
<text x="769.7" y="152.7" text-anchor="middle" class="al">30</text>
<text x="722.5" y="105.2" text-anchor="middle" class="al">60</text>
<text x="653.5" y="87.9" text-anchor="middle" class="al">90</text>
<text x="582.7" y="105.2" text-anchor="middle" class="al">120</text>
<text x="535.4" y="152.7" text-anchor="middle" class="al">150</text>
<text x="518.2" y="221.2" text-anchor="middle" class="al">180</text>
<text x="535.4" y="289.9" text-anchor="middle" class="al">210</text>
<text x="582.7" y="337.0" text-anchor="middle" class="al">240</text>
<text x="653.5" y="354.1" text-anchor="middle" class="al">270</text>
<text x="724.2" y="337.0" text-anchor="middle" class="al">300</text>
<text x="771.5" y="289.9" text-anchor="middle" class="al">330</text>
<path transform="translate(769.9000000000001,220)" d="M-4.4,-3.4 L4.4,3.4 M4.4,-3.4 L-4.4,3.4" stroke="#0505ff" stroke-width="4.4" fill="none"/>
<line x1="653.7" y1="219.2" x2="780.9000000000001" y2="219.2" stroke="#c9615f" stroke-width="0.7"/>
<line x1="653.70" y1="217.60" x2="653.70" y2="219.2" stroke="#c9615f" stroke-width="0.5"/>
<line x1="658.34" y1="218.30" x2="658.34" y2="219.2" stroke="#c9615f" stroke-width="0.5"/>
<line x1="662.98" y1="218.30" x2="662.98" y2="219.2" stroke="#c9615f" stroke-width="0.5"/>
<line x1="667.62" y1="218.30" x2="667.62" y2="219.2" stroke="#c9615f" stroke-width="0.5"/>
<line x1="672.26" y1="218.30" x2="672.26" y2="219.2" stroke="#c9615f" stroke-width="0.5"/>
<line x1="676.90" y1="217.60" x2="676.90" y2="219.2" stroke="#c9615f" stroke-width="0.5"/>
<line x1="681.54" y1="218.30" x2="681.54" y2="219.2" stroke="#c9615f" stroke-width="0.5"/>
<line x1="686.18" y1="218.30" x2="686.18" y2="219.2" stroke="#c9615f" stroke-width="0.5"/>
<line x1="690.82" y1="218.30" x2="690.82" y2="219.2" stroke="#c9615f" stroke-width="0.5"/>
<line x1="695.46" y1="218.30" x2="695.46" y2="219.2" stroke="#c9615f" stroke-width="0.5"/>
<line x1="700.10" y1="217.60" x2="700.10" y2="219.2" stroke="#c9615f" stroke-width="0.5"/>
<line x1="704.74" y1="218.30" x2="704.74" y2="219.2" stroke="#c9615f" stroke-width="0.5"/>
<line x1="709.38" y1="218.30" x2="709.38" y2="219.2" stroke="#c9615f" stroke-width="0.5"/>
<line x1="714.02" y1="218.30" x2="714.02" y2="219.2" stroke="#c9615f" stroke-width="0.5"/>
<line x1="718.66" y1="218.30" x2="718.66" y2="219.2" stroke="#c9615f" stroke-width="0.5"/>
<line x1="723.30" y1="217.60" x2="723.30" y2="219.2" stroke="#c9615f" stroke-width="0.5"/>
<line x1="727.94" y1="218.30" x2="727.94" y2="219.2" stroke="#c9615f" stroke-width="0.5"/>
<line x1="732.58" y1="218.30" x2="732.58" y2="219.2" stroke="#c9615f" stroke-width="0.5"/>
<line x1="737.22" y1="218.30" x2="737.22" y2="219.2" stroke="#c9615f" stroke-width="0.5"/>
<line x1="741.86" y1="218.30" x2="741.86" y2="219.2" stroke="#c9615f" stroke-width="0.5"/>
<line x1="746.50" y1="217.60" x2="746.50" y2="219.2" stroke="#c9615f" stroke-width="0.5"/>
<line x1="751.14" y1="218.30" x2="751.14" y2="219.2" stroke="#c9615f" stroke-width="0.5"/>
<line x1="755.78" y1="218.30" x2="755.78" y2="219.2" stroke="#c9615f" stroke-width="0.5"/>
<line x1="760.42" y1="218.30" x2="760.42" y2="219.2" stroke="#c9615f" stroke-width="0.5"/>
<line x1="765.06" y1="218.30" x2="765.06" y2="219.2" stroke="#c9615f" stroke-width="0.5"/>
<line x1="769.70" y1="217.60" x2="769.70" y2="219.2" stroke="#c9615f" stroke-width="0.5"/>
<line x1="774.34" y1="218.30" x2="774.34" y2="219.2" stroke="#c9615f" stroke-width="0.5"/>
<line x1="778.98" y1="218.30" x2="778.98" y2="219.2" stroke="#c9615f" stroke-width="0.5"/>
<text transform="translate(651.70,216.40) rotate(90) scale(0.9,1)" text-anchor="end" class="rl">0</text>
<text transform="translate(674.90,216.40) rotate(90) scale(0.9,1)" text-anchor="end" class="rl">0.2</text>
<text transform="translate(698.10,216.40) rotate(90) scale(0.9,1)" text-anchor="end" class="rl">0.4</text>
<text transform="translate(721.30,216.40) rotate(90) scale(0.9,1)" text-anchor="end" class="rl">0.6</text>
<text transform="translate(744.50,216.40) rotate(90) scale(0.9,1)" text-anchor="end" class="rl">0.8</text>
<rect x="766.50" y="212.90" width="6.6" height="3.9" fill="#fff"/>
<text transform="translate(767.70,216.40) rotate(90) scale(0.9,1)" text-anchor="end" class="rl">1</text>
</svg>
<div class="abs" style="left:500px;top:84px;width:105px;height:12.5px;background:#e8e9ef"></div>
<div class="abs" style="left:500px;top:84px;width:38.5px;height:12.5px;background:#efeff3;border:1px solid #cfd0d6;box-sizing:border-box"></div>
<div class="abs" style="left:500px;top:84px;width:18.5px;height:12.5px;background:linear-gradient(#f4f4f6,#dcdde2);border:1px solid #c8c9d0;box-sizing:border-box"></div>
<div class="abs cj" style="left:540.5px;top:85.5px;font-size:7px;line-height:10px;color:#333">关闭</div>
<div class="abs" style="left:766.3px;top:270.3px;width:26.5px;height:25.6px;background:#e9eaef;border:1px solid #e3e4e9;box-sizing:border-box;border-radius:1px"></div>
<svg class="abs" style="left:766.3px;top:270.3px" width="27" height="25" viewBox="0 0 27 25"><polygon points="9.93,9.58 9.93,11.02 9.20,10.88 8.76,11.94 9.38,12.36 8.36,13.38 7.94,12.76 6.88,13.20 7.02,13.93 5.58,13.93 5.72,13.20 4.66,12.76 4.24,13.38 3.22,12.36 3.84,11.94 3.40,10.88 2.67,11.02 2.67,9.58 3.40,9.72 3.84,8.66 3.22,8.24 4.24,7.22 4.66,7.84 5.72,7.40 5.58,6.67 7.02,6.67 6.88,7.40 7.94,7.84 8.36,7.22 9.38,8.24 8.76,8.66 9.20,9.72" fill="#cfcfd2" stroke="#b0b0b4" stroke-width="0.5" stroke-linejoin="round"/><circle cx="6.3" cy="10.3" r="0.7" fill="#a8a8ac"/><polygon points="14.03,14.58 14.03,15.82 13.48,15.70 13.05,16.60 13.49,16.95 12.51,17.72 12.27,17.22 11.30,17.44 11.30,18.00 10.09,17.72 10.33,17.22 9.55,16.60 9.11,16.95 8.57,15.82 9.12,15.70 9.12,14.70 8.57,14.58 9.11,13.45 9.55,13.80 10.33,13.18 10.09,12.68 11.30,12.40 11.30,12.96 12.27,13.18 12.51,12.68 13.49,13.45 13.05,13.80 13.48,14.70" fill="#c2c2c5" stroke="#a8a8ac" stroke-width="0.5" stroke-linejoin="round"/><circle cx="11.3" cy="15.2" r="0.6" fill="#a8a8ac"/></svg>
<div class="abs" style="left:451.6px;top:361.5px;width:405.4px;height:145.3px;background:#ebecf1;border:1px solid #e1e2e7;box-sizing:border-box"></div>
<div class="abs" style="left:453px;top:398.2px;width:402.5px;height:34.6px;background:#9bb5d5"></div>
<div class="abs" style="left:453px;top:468.5px;width:364.5px;height:1px;background:#d9dbe1"></div>
<div class="abs cj lab sm" style="left:537.3px;top:363.5px;width:40px;color:#555;font-weight:normal">振动</div>
<div class="abs cj lab sm" style="left:684.5px;top:363.5px;width:40px;color:#555;font-weight:normal">相位</div>
<div class="abs inp" style="left:490.8px;top:378.2px;width:133px;height:14.4px;background:#ebecf1;border:1px solid #d3d4da;color:#a4a5ad"><span>0.00</span><i style="background:#a4a5ad"></i></div>
<div class="abs inp" style="left:637.8px;top:378.2px;width:132.7px;height:14.4px;background:#ebecf1;border:1px solid #d3d4da;color:#a4a5ad"><span>0</span><i style="background:#a4a5ad"></i></div>
<svg class="abs" style="left:789.1999999999999px;top:379.4px" width="9" height="11.6" viewBox="0 0 9 11.6"><path d="M0.4,5.8 L6,0.4 Q8.9,5.8 6,11.2 Z" fill="url(#gd)" stroke="#b4b4b8" stroke-width="0.5" stroke-linejoin="round"/></svg>
<div class="abs btnd" style="left:810.3px;top:374.4px;width:44.4px;height:21.8px"></div>
<svg class="abs" style="left:818.7px;top:381.7px" width="8.4" height="7.4" viewBox="0 0 8.4 7.4"><rect x="0" y="0" width="8.4" height="1.9" fill="#77787c"/><rect x="0" y="2.7" width="8.4" height="1.9" fill="#77787c"/><rect x="0" y="5.4" width="8.4" height="1.9" fill="#77787c"/></svg>
<div class="abs bt" style="left:830.2px;top:379.4px;color:#8b1616;transform:scaleX(1.15)">Init</div>
<div class="abs cj lab sm" style="left:537.3px;top:399px;width:40px;color:#8d9fb8;font-weight:normal">振动</div>
<div class="abs cj lab sm" style="left:684.5px;top:399px;width:40px;color:#8d9fb8;font-weight:normal">相位</div>
<div class="abs inp" style="left:490.8px;top:413.8px;width:133px;height:14.4px;background:#ebecf1;border:1px solid #d3d4da;color:#a4a5ad"><span>0.00</span><i style="background:#a4a5ad"></i></div>
<div class="abs inp" style="left:637.8px;top:413.8px;width:132.7px;height:14.4px;background:#ebecf1;border:1px solid #d3d4da;color:#a4a5ad"><span>0</span><i style="background:#a4a5ad"></i></div>
<svg class="abs" style="left:789.1999999999999px;top:415.0px" width="9" height="11.6" viewBox="0 0 9 11.6"><path d="M0.4,5.8 L6,0.4 Q8.9,5.8 6,11.2 Z" fill="url(#gd)" stroke="#b4b4b8" stroke-width="0.5" stroke-linejoin="round"/></svg>
<svg class="abs" style="left:464.5px;top:415.8px" width="8" height="9" viewBox="0 0 8 9"><path d="M0.7,0.8 L7,4.5 L0.7,8.2 Z" fill="#c6c6c8" stroke="#aeaeb2" stroke-width="0.6"/></svg>
<div class="abs btnd" style="left:810.3px;top:410px;width:44.4px;height:21.5px;background:#d8dfeb;border-color:#d0d8e6"></div>
<svg class="abs" style="left:820.5px;top:417.2px" width="8.4" height="7.4" viewBox="0 0 8.4 7.4"><rect x="0" y="0" width="8.4" height="1.9" fill="#77787c"/><rect x="0" y="2.7" width="8.4" height="1.9" fill="#77787c"/><rect x="0" y="5.4" width="8.4" height="1.9" fill="#77787c"/></svg>
<div class="abs bt" style="left:832.3px;top:414.9px;color:#dd6f12;transform:scaleX(0.97)">T1</div>
<div class="abs cj lab sm" style="left:539.5px;top:434.5px;width:40px;color:#777;font-weight:normal">试重</div>
<div class="abs cj lab sm" style="left:689.5px;top:434.5px;width:40px;color:#777;font-weight:normal">角度</div>
<div class="abs inp" style="left:491.4px;top:449.3px;width:136.5px;height:14.4px;background:#ebecf1;border:1px solid #d3d4da;color:#a4a5ad"><span>1.00</span><i style="background:#a4a5ad"></i></div>
<div class="abs inp" style="left:641.9px;top:449.3px;width:135.9px;height:14.4px;background:#ebecf1;border:1px solid #d3d4da;color:#a4a5ad"><span>0</span><i style="background:#a4a5ad"></i></div>
<svg class="abs" style="left:796.0px;top:450.5px" width="9" height="11.6" viewBox="0 0 9 11.6"><path d="M0.4,5.8 L6,0.4 Q8.9,5.8 6,11.2 Z" fill="url(#gd)" stroke="#b4b4b8" stroke-width="0.5" stroke-linejoin="round"/></svg>
<svg class="abs" style="left:465px;top:450.5px" width="9" height="12" viewBox="0 0 9 12"><path d="M0.7,0.7 L0.7,9.2 L2.8,7.2 L4.4,11 L5.9,10.4 L4.3,6.7 L7.2,6.7 Z" fill="#b6b6b8" stroke="#a6a6aa" stroke-width="0.7"/></svg>
<div class="abs btnd" style="left:817px;top:435px;width:37.7px;height:32px"></div>
<div class="abs cj" style="left:817px;top:442.5px;width:37.7px;text-align:center;font-size:7px;line-height:8.5px;color:#b0b1b8">移除<br>试重</div>
<div class="abs cj lab" style="left:536px;top:473px;width:40px;color:#777">校正质量</div>
<div class="abs cj lab" style="left:673px;top:473px;width:40px;color:#777">角度</div>
<div class="abs cj lab" style="left:764px;top:473px;width:40px;color:#777">质量</div>
<svg class="abs" style="left:734.1px;top:488.9px" width="9" height="11.6" viewBox="0 0 9 11.6"><path d="M0.4,5.8 L6,0.4 Q8.9,5.8 6,11.2 Z" fill="url(#gd)" stroke="#b4b4b8" stroke-width="0.5" stroke-linejoin="round"/></svg>
<div class="abs btnd" style="left:817px;top:471px;width:37.7px;height:33.5px"></div>
<div class="abs cj" style="left:817px;top:483.5px;width:37.7px;text-align:center;font-size:7px;line-height:9px;color:#b0b1b8">调整</div>
<div class="abs" style="left:449px;top:16px;width:1.2px;height:491px;background:#d6d7de"></div>
<div class="abs" style="left:858.7px;top:12.4px;width:1.3px;height:497px;background:#a8a9b0"></div>
<div class="abs" style="left:857.5px;top:12.4px;width:1.2px;height:496px;background:#f1f2f6"></div>
<div class="abs" style="left:42.5px;top:507px;width:815px;height:1.2px;background:#f4f5f8"></div>
<div class="abs" style="left:41px;top:508.2px;width:819px;height:1.5px;background:#a9aab1"></div>
<div class="abs" style="left:0;top:509.7px;width:860px;height:5px;background:#d5ddf4"></div>
</body></html>
